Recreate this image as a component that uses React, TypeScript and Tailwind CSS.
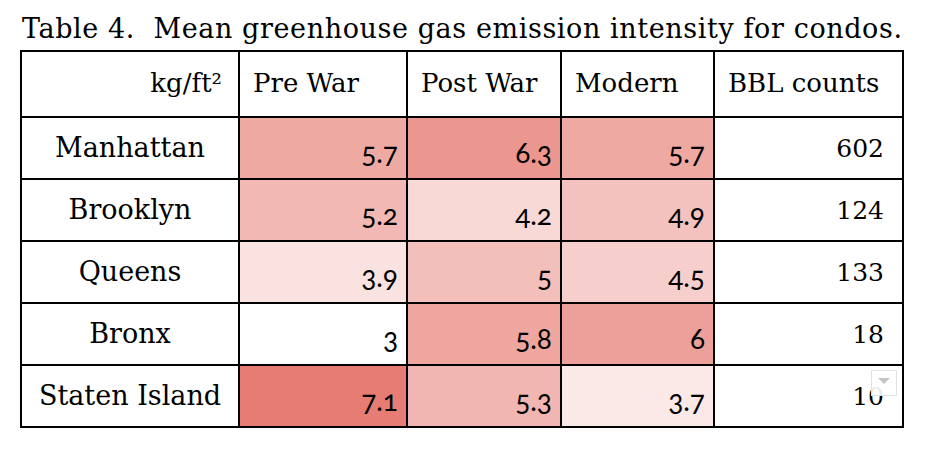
const ROWS = [
  {
    name: "Manhattan",
    cells: [
      { v: "5.7", bg: "bg-[#efa9a3]" },
      { v: "6.3", bg: "bg-[#eb968e]" },
      { v: "5.7", bg: "bg-[#efa9a3]" },
    ],
    count: "602",
  },
  {
    name: "Brooklyn",
    cells: [
      { v: "5.2", bg: "bg-[#f2b9b4]" },
      { v: "4.2", bg: "bg-[#f8d9d6]" },
      { v: "4.9", bg: "bg-[#f3c2be]" },
    ],
    count: "124",
  },
  {
    name: "Queens",
    cells: [
      { v: "3.9", bg: "bg-[#f9e2e0]" },
      { v: "5", bg: "bg-[#f3bfbb]" },
      { v: "4.5", bg: "bg-[#f6cfcc]" },
    ],
    count: "133",
  },
  {
    name: "Bronx",
    cells: [
      { v: "3", bg: "bg-white" },
      { v: "5.8", bg: "bg-[#eea69f]" },
      { v: "6", bg: "bg-[#ed9f99]" },
    ],
    count: "18",
  },
  {
    name: "Staten Island",
    cells: [
      { v: "7.1", bg: "bg-[#e67c73]" },
      { v: "5.3", bg: "bg-[#f1b6b1]" },
      { v: "3.7", bg: "bg-[#fbe9e7]" },
    ],
    count: "10",
  },
];

const HEADERS = ["Pre War", "Post War", "Modern", "BBL counts"];

export default function App() {
  return (
    <div className="w-[950px] h-[458px] bg-white px-[20px] pt-[12px] text-black font-['DejaVu_Serif',serif]">
      <h1 className="text-[27px] leading-[34px] tracking-[0.6px] pl-[2px] mb-[4px] whitespace-pre">
        {"Table 4.  Mean greenhouse gas emission intensity for condos."}
      </h1>

      <div className="grid grid-cols-[218px_168px_154px_153px_189px] grid-rows-[66px_repeat(5,62px)] w-[884px] border-l-2 border-t-2 border-black">
        {/* header */}
        <div className="flex items-end justify-end pr-[16px] pb-[20px] text-[26px] leading-none border-r-2 border-b-2 border-black">
          kg/ft²
        </div>
        {HEADERS.map((h) => (
          <div
            key={h}
            className="flex items-end pl-[13px] pb-[20px] text-[26px] leading-none border-r-2 border-b-2 border-black"
          >
            {h}
          </div>
        ))}

        {ROWS.map((r, i) => (
          <>
            <div
              key={r.name}
              className="flex items-end justify-center pb-[17px] text-[27px] leading-none border-r-2 border-b-2 border-black"
            >
              {r.name}
            </div>
            {r.cells.map((c, j) => (
              <div
                key={r.name + j}
                className={`flex items-end justify-end pr-[8px] pb-[12px] text-[28px] leading-none font-['Lato',sans-serif] oldstyle-nums border-r-2 border-b-2 border-black ${c.bg}`}
              >
                {c.v}
              </div>
            ))}
            <div
              key={r.name + "count"}
              className="relative flex items-end justify-end pr-[18px] pb-[17px] text-[25px] leading-none border-r-2 border-b-2 border-black"
            >
              {r.count}
              {i === ROWS.length - 1 && (
                <div className="absolute right-[5px] top-[4px] w-[26px] h-[26px] bg-white/90 border border-[#e2e2e2] flex justify-center pt-[7px]">
                  <div className="w-0 h-0 border-l-[6px] border-r-[6px] border-t-[6px] border-l-transparent border-r-transparent border-t-[#c4c4c4]" />
                </div>
              )}
            </div>
          </>
        ))}
      </div>
    </div>
  );
}
